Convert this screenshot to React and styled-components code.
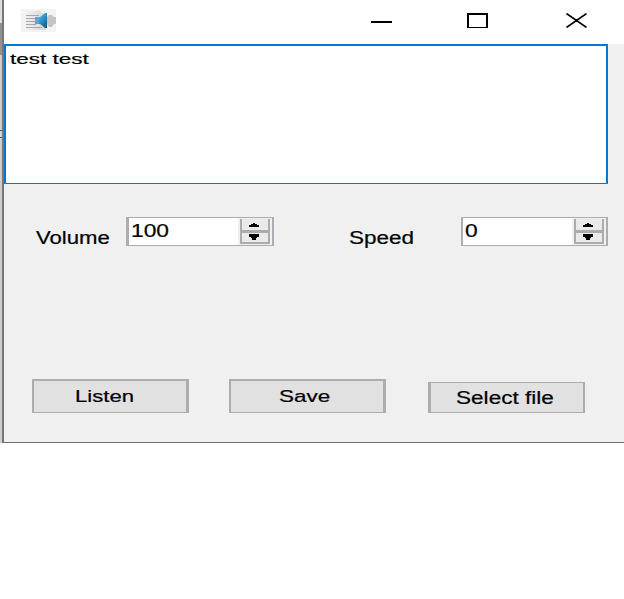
import React from 'react';
import styled, { createGlobalStyle } from 'styled-components';

const GlobalStyle = createGlobalStyle`
    body {
        margin: 0;
        background: #fff;
        overflow: hidden;
        font-family: 'Liberation Sans', Arial, sans-serif;
        color: #000;
    }

    * {
        box-sizing: border-box;
    }
`;

const Desktop = styled.div`
    display: flex;
    width: 624px;
    height: 443px;
`;

const BehindWindow = styled.div`
    display: flex;
    flex-direction: column;
    width: 2px;
    height: 443px;
    background: #cfcfcf;
`;

const BehindPart = styled.div`
    height: ${({ $height }) => $height}px;
    background: ${({ $color }) => $color};
`;

const Window = styled.div`
    display: flex;
    flex-direction: column;
    width: 622px;
    height: 443px;
    border-left: 2px solid #777;
    border-bottom: 1px solid #6d6d6d;
    background: #f0f0f0;
`;

const TitleBar = styled.div`
    display: flex;
    align-items: flex-start;
    width: 620px;
    height: 44px;
    padding: 9px 37px 0 17px;
    background: #fff;
`;

const WindowControls = styled.div`
    display: flex;
    gap: 75px;
    margin-left: auto;
    padding-top: 4px;
`;

const ControlIcon = styled.svg`
    display: block;
    width: 21px;
    height: 15px;
    margin-left: ${({ $shift }) => $shift || 0}px;
`;

const TextArea = styled.div`
    width: 604px;
    height: 140px;
    padding: 4px 0 0 4px;
    border: 2px solid #0078d7;
    border-bottom-width: 1px;
    background: #fff;
`;

/* Wide letters: the line is stretched sideways from its left edge */
const Text = styled.span`
    display: block;
    width: max-content;
    font-size: ${({ $size }) => $size}px;
    line-height: 18px;
    white-space: nowrap;
    -webkit-text-stroke: 0.2px #000;
    transform: scaleX(${({ $stretch }) => $stretch});
    transform-origin: 0 50%;
`;

const Settings = styled.div`
    display: flex;
    align-items: flex-start;
    margin-top: 33px;
    padding-left: 32px;
`;

const Label = styled.div`
    width: ${({ $width }) => $width}px;
    padding-top: 12px;
`;

const NumberBox = styled.div`
    display: flex;
    width: ${({ $width }) => $width}px;
    height: 29px;
    margin-right: ${({ $after }) => $after || 0}px;
    border: solid #abadb3;
    border-width: 1px 2px 1px ${({ $left }) => $left}px;
    background: #fff;
`;

const NumberValue = styled.div`
    flex: 1;
    padding: 4px 0 0 ${({ $indent }) => $indent}px;
`;

const Stepper = styled.div`
    width: 34px;
    padding: 1px 2px 0;
    background: #f0f0f0;
`;

const StepButton = styled.div`
    display: flex;
    width: 30px;
    height: ${({ $down }) => ($down ? 14 : 11)}px;
    padding: ${({ $down }) => ($down ? 1 : 4)}px 0 0 7px;
    border: solid #acacac;
    border-width: ${({ $down }) => ($down ? '3px 2px 2px' : '0 2px')};
    background: #eaeaea;
`;

const Actions = styled.div`
    display: flex;
    align-items: flex-end;
    margin-top: 132px;
    padding-left: 28px;
`;

const Button = styled.div`
    width: 157px;
    height: ${({ $height }) => $height}px;
    margin-right: ${({ $after }) => $after || 0}px;
    padding: ${({ $padding }) => $padding};
    border: solid #adadad;
    border-width: ${({ $borders }) => $borders};
    background: #e1e1e1;
`;

const AppIcon = () => (
    <svg width="35" height="23" viewBox="0 0 35 23">
        <defs>
            <linearGradient id="page" x1="0" x2="1" y1="0" y2="0">
                <stop offset="0" stopColor="#f4f4f4" />
                <stop offset="1" stopColor="#d6d6d6" />
            </linearGradient>
            <linearGradient id="horn" x1="0" x2="1" y1="0" y2="1">
                <stop offset="0" stopColor="#8ad4f0" />
                <stop offset="0.5" stopColor="#2c98d0" />
                <stop offset="1" stopColor="#14517f" />
            </linearGradient>
        </defs>
        <rect width="35" height="23" fill="#f3f3f3" />
        <path d="M2 2H19L25 7V21H2Z" fill="url(#page)" />
        <path
            d="M5 6.5H18M5 9.5H15M5 12.5H14M5 15.5H15M5 18.5H21"
            stroke="#a6a6a6"
            strokeWidth="1.2"
            fill="none"
        />
        <path d="M26 8L28 6H31L33 8H35V15H33L31 18H28L26 15Z" fill="#c3c5c6" />
        <path d="M14 8H19L24 4H26V19H24L19 15H14Z" fill="url(#horn)" />
        <path d="M14 8H18V15H14Z" fill="#5aa8cf" />
    </svg>
);

const StepArrow = ({ down }) => (
    <svg width="10" height="6" viewBox="0 0 10 6" shapeRendering="crispEdges">
        {down ? (
            <path d="M0 0H10V3H8V4H7V6H3V4H2V3H0Z" />
        ) : (
            <path d="M4 0H6V1H8V2H10V4H0V2H2V1H4Z" />
        )}
    </svg>
);

const NumberInput = ({ value, width, left, indent, stretch, after }) => (
    <NumberBox $width={width} $left={left} $after={after}>
        <NumberValue $indent={indent}>
            <Text $size={19} $stretch={stretch}>{value}</Text>
        </NumberValue>
        <Stepper>
            <StepButton>
                <StepArrow />
            </StepButton>
            <StepButton $down>
                <StepArrow down />
            </StepButton>
        </Stepper>
    </NumberBox>
);

const App = () => (
    <>
        <GlobalStyle />
        <Desktop>
            <BehindWindow>
                <BehindPart $height={23} $color="#dcdcdc" />
                <BehindPart $height={32} $color="#929292" />
                <BehindPart $height={75} $color="#cfcfcf" />
                <BehindPart $height={1} $color="#1c629b" />
                <BehindPart $height={6} $color="#d4d4d4" />
                <BehindPart $height={1} $color="#1c629b" />
            </BehindWindow>
            <Window>
                <TitleBar>
                    <AppIcon />
                    <WindowControls>
                        <ControlIcon viewBox="0 0 21 15" shapeRendering="crispEdges">
                            <rect y="8" width="21" height="2" />
                        </ControlIcon>
                        <ControlIcon viewBox="0 0 21 15" shapeRendering="crispEdges">
                            <path d="M0 0H21V15H0ZM2 2V14H19V2Z" fillRule="evenodd" />
                        </ControlIcon>
                        <ControlIcon viewBox="0 0 21 15" $shift={3}>
                            <path d="M0.5 0.5L20.5 14.5M20.5 0.5L0.5 14.5" stroke="#000" strokeWidth="1.6" />
                            <rect x="9" y="6" width="3" height="3" />
                        </ControlIcon>
                    </WindowControls>
                </TitleBar>
                <TextArea>
                    <Text $size={15.5} $stretch={1.45}>test test</Text>
                </TextArea>
                <Settings>
                    <Label $width={90}>
                        <Text $size={18} $stretch={1.23}>Volume</Text>
                    </Label>
                    <NumberInput value="100" width={148} left={3} indent={2} stretch={1.2} after={75} />
                    <Label $width={112}>
                        <Text $size={18} $stretch={1.25}>Speed</Text>
                    </Label>
                    <NumberInput value="0" width={147} left={2} indent={2} stretch={1.2} />
                </Settings>
                <Actions>
                    <Button $height={34} $after={40} $borders="2px 3px 1px 2px" $padding="7px 0 0 41px">
                        <Text $size={17} $stretch={1.3}>Listen</Text>
                    </Button>
                    <Button $height={34} $after={42} $borders="2px 3px 1px 2px" $padding="7px 0 0 48px">
                        <Text $size={17} $stretch={1.32}>Save</Text>
                    </Button>
                    <Button $height={31} $borders="1px 2px 1px 3px" $padding="6px 0 0 25px">
                        <Text $size={17.5} $stretch={1.29}>Select file</Text>
                    </Button>
                </Actions>
            </Window>
        </Desktop>
    </>
);

export default App;
